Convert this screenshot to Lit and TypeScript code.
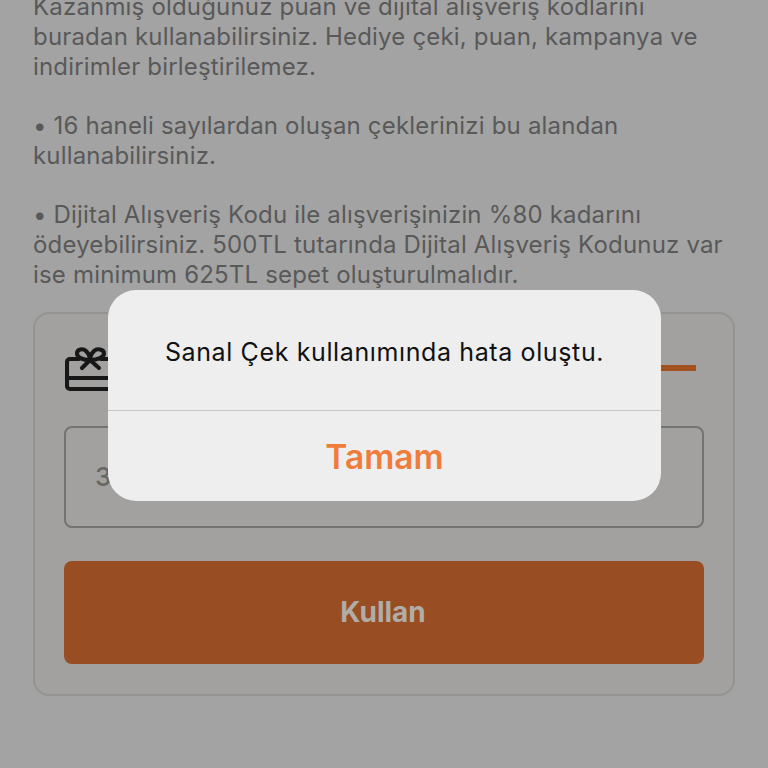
import { LitElement, html, css } from "lit";
import { customElement } from "lit/decorators.js";

@customElement("app-root")
export class AppRoot extends LitElement {
  static styles = css`
    :host {
      display: block;
      position: relative;
      width: 768px;
      height: 768px;
      overflow: hidden;
      background: #a3a3a3;
      font-family: Inter, "Liberation Sans", sans-serif;
    }
    .page {
      display: flex;
      flex-direction: column;
      padding: 0 33px;
      margin-top: -8px;
    }
    .info {
      margin: 0 0 22px;
      font-size: 24px;
      letter-spacing: 0.18px;
      line-height: 29.75px;
      color: #595959;
      white-space: pre-line;
    }
    .card {
      height: 384px;
      box-sizing: border-box;
      border: 2px solid #939391;
      border-radius: 16px;
      background: #a3a19f;
      padding: 32px 29px 0;
      display: flex;
      flex-direction: column;
    }
    .tabs {
      display: flex;
      justify-content: space-between;
      align-items: flex-start;
      height: 50px;
      margin-bottom: 30px;
    }
    .gift {
      width: 50px;
      height: 46px;
      margin-left: 1px;
      flex: none;
    }
    .tab-line {
      width: 200px;
      height: 6px;
      margin: 19px 8px 0 0;
      background: #a3521f;
    }
    .field {
      height: 102px;
      box-sizing: border-box;
      border: 2px solid #737371;
      border-radius: 8px;
      display: flex;
      align-items: center;
      padding-left: 29px;
      font-size: 26px;
      font-weight: 500;
      color: #666665;
      margin-bottom: 33px;
    }
    .use {
      height: 103px;
      box-sizing: border-box;
      padding-right: 2px;
      border-radius: 8px;
      background: #984e22;
      display: flex;
      align-items: center;
      justify-content: center;
      color: #b0aca8;
      font-size: 28px;
      font-weight: 700;
    }
    .dialog {
      position: absolute;
      left: 108px;
      top: 290px;
      width: 553px;
      height: 211px;
      border-radius: 28px;
      background: #eeeeee;
      display: flex;
      flex-direction: column;
    }
    .message {
      height: 121px;
      box-sizing: border-box;
      padding-top: 4px;
      display: flex;
      align-items: center;
      justify-content: center;
      font-size: 25px;
      letter-spacing: 0.62px;
      color: #111111;
      border-bottom: 1px solid #c6c6c6;
    }
    .ok {
      flex: 1;
      box-sizing: border-box;
      padding-top: 2px;
      display: flex;
      align-items: center;
      justify-content: center;
      font-size: 33.5px;
      font-weight: 600;
      color: #f07c3c;
    }
  `;

  render() {
    return html`
      <div class="page">
        <p class="info">Kazanmış olduğunuz puan ve dijital alışveriş kodlarını
buradan kullanabilirsiniz. Hediye çeki, puan, kampanya ve
indirimler birleştirilemez.

• 16 haneli sayılardan oluşan çeklerinizi bu alandan
kullanabilirsiniz.

• Dijital Alışveriş Kodu ile alışverişinizin %80 kadarını
ödeyebilirsiniz. 500TL tutarında Dijital Alışveriş Kodunuz var
ise minimum 625TL sepet oluşturulmalıdır.</p>
        <div class="card">
          <div class="tabs">
            <svg class="gift" viewBox="0 0 50 46" fill="none" stroke="#171717" stroke-width="4.1" stroke-linecap="round" stroke-linejoin="round">
              <path d="M14 13H5a3 3 0 0 0-3 3v24a3 3 0 0 0 3 3h40a3 3 0 0 0 3-3V16a3 3 0 0 0-3-3H36" />
              <path d="M2 32h46" />
              <path d="M25 14C17 14 12 11 12 7.500C12 3 18 2 21 5C23.500 7.500 25 10.500 25 14C25 10.500 26.500 7.500 29 5C32 2 39 3 39 7.500C39 11 33 14 25 14Z" />
              <path d="M25 14L17 22M25 14L34 22" />
            </svg>
            <div class="tab-line"></div>
          </div>
          <div class="field">3</div>
          <div class="use">Kullan</div>
        </div>
      </div>
      <div class="dialog">
        <div class="message">Sanal Çek kullanımında hata oluştu.</div>
        <div class="ok">Tamam</div>
      </div>
    `;
  }
}
